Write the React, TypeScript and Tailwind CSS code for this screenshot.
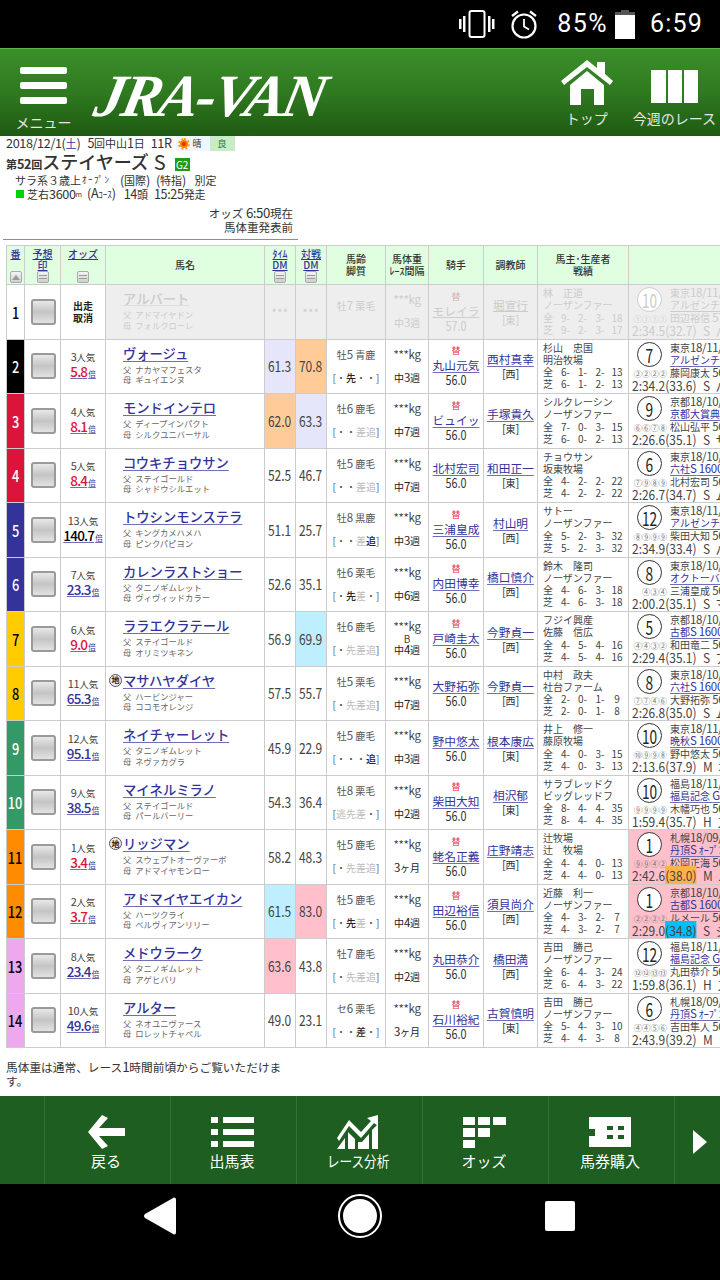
import React from 'react';

type Row = {
  no: number; bg: string; fg: string; name: string; sire: string; dam: string; chiho?: boolean;
  pop: string; odds: string; oddsColor: string; tm: string; tmBg?: string; vs: string; vsBg?: string;
  age: string; legs: number[]; gap: string; blinker?: boolean; sw?: boolean; jockey: string;
  trainer: string; area: string; owner: string; breeder: string; all: string[]; turf: string[];
  rank: string; place: string; race: string; pass: string; rider: string; time: string; last: string; lastBg?: string; tail: string; hit?: boolean;
};

const RED = 'text-[#dc143c]';
const BLUE = 'text-[#333399]';
const BLACK = 'text-black';
const LAV = 'bg-[#e6e6fa]';
const PEACH = 'bg-[#ffcc99]';
const SKY = 'bg-[#bfefff]';
const PINK = 'bg-[#ffc0cb]';

const rows: Row[] = [
  { no: 2, bg: 'bg-black', fg: 'text-white', name: 'ヴォージュ', sire: 'ナカヤマフェスタ', dam: 'ギュイエンヌ', pop: '3人気', odds: '5.8', oddsColor: RED, tm: '61.3', tmBg: LAV, vs: '70.8', vsBg: PEACH, age: '牡5 青鹿', legs: [0, 2, 0, 0], gap: '中3週', sw: true, jockey: '丸山元気', trainer: '西村真幸', area: '西', owner: '杉山　忠国', breeder: '明治牧場', all: ['6', '1', '2', '13'], turf: ['6', '1', '2', '13'], rank: '7', place: '東京18/11/', race: 'アルゼンチン共和国杯', pass: '②②②②', rider: '藤岡康太 56', time: '2:34.2', last: '(33.6)', tail: 'S  バ' },
  { no: 3, bg: 'bg-[#dc143c]', fg: 'text-white', name: 'モンドインテロ', sire: 'ディープインパクト', dam: 'シルクユニバーサル', pop: '4人気', odds: '8.1', oddsColor: RED, tm: '62.0', tmBg: PEACH, vs: '63.3', vsBg: LAV, age: '牡6 鹿毛', legs: [0, 0, 1, 1], gap: '中7週', sw: true, jockey: 'ビュイッ', trainer: '手塚貴久', area: '東', owner: 'シルクレーシン', breeder: 'ノーザンファー', all: ['7', '0', '3', '15'], turf: ['6', '0', '2', '13'], rank: '9', place: '京都18/10/', race: '京都大賞典', pass: '⑥⑥⑦⑧', rider: '松山弘平 56', time: '2:26.6', last: '(35.1)', tail: 'S  サ' },
  { no: 4, bg: 'bg-[#dc143c]', fg: 'text-white', name: 'コウキチョウサン', sire: 'ステイゴールド', dam: 'シャドウシルエット', pop: '5人気', odds: '8.4', oddsColor: RED, tm: '52.5', vs: '46.7', age: '牡5 鹿毛', legs: [0, 0, 1, 1], gap: '中7週', jockey: '北村宏司', trainer: '和田正一', area: '東', owner: 'チョウサン', breeder: '坂東牧場', all: ['4', '2', '2', '22'], turf: ['4', '2', '2', '22'], rank: '6', place: '東京18/10/', race: '六社S 1600', pass: '⑦⑨⑧⑨', rider: '北村宏司 56', time: '2:26.7', last: '(34.7)', tail: 'S  ム' },
  { no: 5, bg: 'bg-[#333399]', fg: 'text-white', name: 'トウシンモンステラ', sire: 'キングカメハメハ', dam: 'ピンクパピヨン', pop: '13人気', odds: '140.7', oddsColor: BLACK, tm: '51.1', vs: '25.7', age: '牡8 黒鹿', legs: [0, 0, 1, 2], gap: '中3週', sw: true, jockey: '三浦皇成', trainer: '村山明', area: '西', owner: 'サトー', breeder: 'ノーザンファー', all: ['5', '2', '3', '32'], turf: ['5', '2', '3', '32'], rank: '12', place: '東京18/11/', race: 'アルゼンチン共和国杯', pass: '⑧⑨⑨⑨', rider: '柴田大知 56', time: '2:34.9', last: '(33.4)', tail: 'S  バ' },
  { no: 6, bg: 'bg-[#333399]', fg: 'text-white', name: 'カレンラストショー', sire: 'タニノギムレット', dam: 'ヴィヴィッドカラー', pop: '7人気', odds: '23.3', oddsColor: BLUE, tm: '52.6', vs: '35.1', age: '牡6 栗毛', legs: [0, 2, 1, 0], gap: '中6週', sw: true, jockey: '内田博幸', trainer: '橋口慎介', area: '西', owner: '鈴木　隆司', breeder: 'ノーザンファー', all: ['4', '6', '3', '18'], turf: ['4', '6', '3', '18'], rank: '8', place: '東京18/10/', race: 'オクトーバーS', pass: '④③④', rider: '三浦皇成 56', time: '2:00.2', last: '(35.1)', tail: 'S  マ' },
  { no: 7, bg: 'bg-[#ffcc00]', fg: 'text-black', name: 'ララエクラテール', sire: 'ステイゴールド', dam: 'オリミツキネン', pop: '6人気', odds: '9.0', oddsColor: RED, tm: '56.9', vs: '69.9', vsBg: SKY, age: '牡6 鹿毛', legs: [0, 1, 1, 1], gap: '中4週', blinker: true, sw: true, jockey: '戸崎圭太', trainer: '今野貞一', area: '西', owner: 'フジイ興産', breeder: '佐藤　信広', all: ['4', '5', '4', '16'], turf: ['4', '5', '4', '16'], rank: '5', place: '京都18/10/', race: '古都S 1600', pass: '④④③②', rider: '和田竜二 56', time: '2:29.4', last: '(35.1)', tail: 'S  ア' },
  { no: 8, bg: 'bg-[#ffcc00]', fg: 'text-black', chiho: true, name: 'マサハヤダイヤ', sire: 'ハービンジャー', dam: 'ココモオレンジ', pop: '11人気', odds: '65.3', oddsColor: BLUE, tm: '57.5', vs: '55.7', age: '牡5 栗毛', legs: [0, 1, 1, 1], gap: '中7週', jockey: '大野拓弥', trainer: '今野貞一', area: '西', owner: '中村　政夫', breeder: '社台ファーム', all: ['2', '0', '1', '9'], turf: ['2', '0', '1', '8'], rank: '8', place: '東京18/10/', race: '六社S 1600', pass: '⑦⑦④⑥', rider: '大野拓弥 56', time: '2:26.8', last: '(35.0)', tail: 'S  ム' },
  { no: 9, bg: 'bg-[#339966]', fg: 'text-white', name: 'ネイチャーレット', sire: 'タニノギムレット', dam: 'ネヴァカグラ', pop: '12人気', odds: '95.1', oddsColor: BLUE, tm: '45.9', vs: '22.9', age: '牡5 鹿毛', legs: [0, 0, 0, 2], gap: '中3週', jockey: '野中悠太', trainer: '根本康広', area: '東', owner: '井上　修一', breeder: '藤原牧場', all: ['4', '0', '3', '15'], turf: ['4', '0', '3', '13'], rank: '10', place: '東京18/11/', race: '晩秋S 1600', pass: '⑩⑨⑨⑧', rider: '野中悠太 56', time: '2:13.6', last: '(37.9)', tail: 'M  ホ' },
  { no: 10, bg: 'bg-[#339966]', fg: 'text-white', name: 'マイネルミラノ', sire: 'ステイゴールド', dam: 'パールバーリー', pop: '9人気', odds: '38.5', oddsColor: BLUE, tm: '54.3', vs: '36.4', age: '牡8 栗毛', legs: [1, 1, 1, 0], gap: '中2週', sw: true, jockey: '柴田大知', trainer: '相沢郁', area: '東', owner: 'サラブレッドク', breeder: 'ビッグレッドフ', all: ['8', '4', '4', '35'], turf: ['8', '4', '4', '35'], rank: '10', place: '福島18/11/', race: '福島記念 G3', pass: '⑨⑨⑨⑨', rider: '木幡巧也 56', time: '1:59.4', last: '(35.7)', tail: 'H  ス' },
  { no: 11, bg: 'bg-[#ff8c00]', fg: 'text-black', chiho: true, name: 'リッジマン', sire: 'スウェプトオーヴァーボ', dam: 'アドマイヤモンロー', pop: '1人気', odds: '3.4', oddsColor: RED, tm: '58.2', vs: '48.3', age: '牡5 鹿毛', legs: [0, 1, 1, 1], gap: '3ヶ月', sw: true, jockey: '蛯名正義', trainer: '庄野靖志', area: '西', owner: '辻牧場', breeder: '辻　牧場', all: ['4', '4', '0', '13'], turf: ['4', '4', '0', '13'], rank: '1', place: '札幌18/09/', race: '丹頂S ｵｰﾌﾟﾝ', pass: '⑨⑨④②', rider: '松岡正海 56', time: '2:42.6', last: '(38.0)', lastBg: 'bg-[#ffb347]', tail: 'M  ニ', hit: true },
  { no: 12, bg: 'bg-[#ff8c00]', fg: 'text-black', name: 'アドマイヤエイカン', sire: 'ハーツクライ', dam: 'ベルヴィアンリリー', pop: '2人気', odds: '3.7', oddsColor: RED, tm: '61.5', tmBg: SKY, vs: '83.0', vsBg: PINK, age: '牡5 鹿毛', legs: [0, 2, 1, 0], gap: '中4週', sw: true, jockey: '田辺裕信', trainer: '須貝尚介', area: '西', owner: '近藤　利一', breeder: 'ノーザンファー', all: ['4', '3', '2', '7'], turf: ['4', '3', '2', '7'], rank: '1', place: '京都18/10/', race: '古都S 1600', pass: '②②②②', rider: 'ルメール 56', time: '2:29.0', last: '(34.8)', lastBg: 'bg-[#00bfff]', tail: 'S  シ', hit: true },
  { no: 13, bg: 'bg-[#eea9ee]', fg: 'text-black', name: 'メドウラーク', sire: 'タニノギムレット', dam: 'アゲヒバリ', pop: '8人気', odds: '23.4', oddsColor: BLUE, tm: '63.6', tmBg: PINK, vs: '43.8', age: '牡7 鹿毛', legs: [0, 1, 1, 1], gap: '中2週', jockey: '丸田恭介', trainer: '橋田満', area: '西', owner: '吉田　勝己', breeder: 'ノーザンファー', all: ['6', '4', '3', '24'], turf: ['6', '4', '3', '22'], rank: '12', place: '福島18/11/', race: '福島記念 G3', pass: '⑫⑫⑬⑬', rider: '丸田恭介 56', time: '1:59.8', last: '(36.1)', tail: 'H  ス' },
  { no: 14, bg: 'bg-[#eea9ee]', fg: 'text-black', name: 'アルター', sire: 'ネオユニヴァース', dam: 'ロレットチャペル', pop: '10人気', odds: '49.6', oddsColor: BLUE, tm: '49.0', vs: '23.1', age: 'セ6 栗毛', legs: [0, 0, 2, 0], gap: '3ヶ月', sw: true, jockey: '石川裕紀', trainer: '古賀慎明', area: '東', owner: '吉田　勝己', breeder: 'ノーザンファー', all: ['5', '4', '3', '10'], turf: ['4', '4', '3', '8'], rank: '6', place: '札幌18/09/', race: '丹頂S ｵｰﾌﾟﾝ', pass: '④④⑤⑥', rider: '吉田隼人 56', time: '2:43.9', last: '(39.2)', tail: 'M  リ' },
];

const COLS = 'grid grid-cols-[19px_36px_45px_159px_31px_31px_59px_43px_55px_54px_91px_120px]';
const CELL = 'border-r border-b border-[#ccc] overflow-hidden';
const LINK = 'underline decoration-[#6f6fb8] underline-offset-2';

// half-width runs sit a little larger than the kanji around them
const Tx = ({ t }: { t: string }) => (
  <>
    {t.split(/([0-9A-Za-z.:/()\-\[\]*]+)/).map((s, i) =>
      i % 2 ? (
        <span key={i} className="text-[1.15em] leading-none tracking-[-0.03em]">{s}</span>
      ) : (
        s
      ),
    )}
  </>
);

// no condensed face is installed, so tall narrow digits are squeezed by hand
const Squeeze = ({ children }: { children: React.ReactNode }) => (
  <span className="inline-block scale-x-[.8] whitespace-nowrap">{children}</span>
);

const SortBtn = ({ up }: { up?: boolean }) => (
  <span className="flex h-[12px] w-[12px] flex-col items-center justify-center gap-[2px] rounded-[2px] border border-[#aaa] bg-gradient-to-b from-[#f4f4f4] to-[#cfcfcf]">
    {up ? (
      <span className="h-0 w-0 border-x-[4px] border-b-[5px] border-x-transparent border-b-[#999]" />
    ) : (
      <>
        <span className="h-px w-[8px] bg-[#999]" />
        <span className="h-px w-[8px] bg-[#999]" />
      </>
    )}
  </span>
);

const CheckBox = () => (
  <div className="ml-[2px] h-[26px] w-[25px] rounded-[3px] border-2 border-[#9a9a9a] bg-gradient-to-b from-[#e8e8e8] via-[#c4c4c4] to-[#e2e2e2]" />
);

const Record = ({ label, v, muted }: { label: string; v: string[]; muted?: boolean }) => (
  <div className={`grid h-[12.3px] grid-cols-[14px_17px_17px_18px_16px] ${muted ? 'text-[#ccc]' : 'text-[#444]'}`}>
    <span>{label}</span>
    <span className="text-center">{v[0]}-</span>
    <span className="text-center">{v[1]}-</span>
    <span className="text-center">{v[2]}-</span>
    <span className="text-center">{v[3]}</span>
  </div>
);

const HeadLink = ({ lines }: { lines: string[] }) => (
  <div className={`${CELL} flex flex-col items-center justify-between bg-[#e0ffe0] pb-px pt-[2px]`}>
    <div className="text-[10px] font-medium leading-[11px] text-[#333399] underline">
      {lines.map((l) => (
        <div key={l} className="text-center">{l}</div>
      ))}
    </div>
    <SortBtn />
  </div>
);

const HeadText = ({ lines }: { lines: string[] }) => (
  <div className={`${CELL} flex flex-col items-center justify-center bg-[#e0ffe0] text-[10px] font-medium leading-[12px] text-[#333]`}>
    {lines.map((l) => (
      <div key={l} className="whitespace-nowrap">{l}</div>
    ))}
  </div>
);

const LastRun = ({ r, muted }: { r: Pick<Row, 'rank' | 'place' | 'race' | 'pass' | 'rider' | 'time' | 'last' | 'lastBg' | 'tail'>; muted?: boolean }) => (
  <div className={`whitespace-nowrap pl-[3px] pt-[2px] text-[10px] leading-[12.3px] ${muted ? 'text-[#ccc]' : 'text-[#444]'}`}>
    <div className="flex h-[25px]">
      <div className={`ml-[5px] flex h-[25px] w-[25px] shrink-0 items-center justify-center rounded-full border-[1.5px] bg-white text-[19px] leading-none ${muted ? 'border-[#ccc] text-[#ccc]' : 'border-[#333] text-[#222]'}`}>
        <span className="inline-block scale-x-[.72]">{r.rank}</span>
      </div>
      <div className="ml-[8px]">
        <div><Tx t={r.place} /></div>
        <div className={`${LINK} ${muted ? 'text-[#ccc] decoration-[#ccc]' : 'text-[#333399]'}`}><Tx t={r.race} /></div>
      </div>
    </div>
    <div className="flex">
      <span className={`w-[35px] text-right text-[8.3px] ${muted ? 'text-[#ccc]' : 'text-[#777]'}`}>{r.pass}</span>
      <span className="ml-[3px]"><Tx t={r.rider} /></span>
    </div>
    <div className="origin-left scale-x-[.92] text-[13px] leading-[13px]">
      <span>{r.time}</span>
      <span className={r.lastBg}>{r.last}</span>
      <span className="ml-[7px] whitespace-pre">{r.tail}</span>
    </div>
  </div>
);

const Leg = ({ legs }: { legs: number[] }) => (
  <span className="whitespace-nowrap text-[#555]">
    [
    {['逃', '先', '差', '追'].map((c, i) => (
      <span key={c} className={`inline-block w-[10px] text-center ${legs[i] === 2 ? 'font-medium text-[#222]' : legs[i] === 1 ? 'text-[#bbb]' : ''}`}>
        {legs[i] === 0 ? '・' : c}
      </span>
    ))}
    ]
  </span>
);

const StatusBar = () => (
  <div className="flex h-[48px] items-center justify-end bg-black pr-[17px] font-['Roboto',sans-serif] text-[25px] text-white">
    <svg width="36" height="28" viewBox="0 0 36 28" className="mr-[14px]" fill="white">
      <rect x="0" y="9" width="2.5" height="10" />
      <rect x="4" y="6" width="2.5" height="16" />
      <rect x="10.5" y="1" width="15" height="26" rx="2" fill="none" stroke="white" strokeWidth="2" />
      <rect x="29" y="6" width="2.5" height="16" />
      <rect x="33" y="9" width="2.5" height="10" />
    </svg>
    <svg width="30" height="30" viewBox="0 0 30 30" className="mr-[18px]" fill="none" stroke="white" strokeWidth="2.2">
      <circle cx="15" cy="17" r="11.5" />
      <path d="M15 10v7.5l5 3" strokeWidth="1.8" />
      <path d="M3 7l6-4.5M27 7l-6-4.5" />
    </svg>
    <span className="mr-[7px] tracking-[1.4px]">85%</span>
    <svg width="20" height="29" viewBox="0 0 20 29" className="mr-[15px]">
      <path d="M6 0h8v2h6v27H0V2h6z" fill="#555" />
      <rect x="0" y="5" width="20" height="24" fill="white" />
    </svg>
    <span className="tracking-[1.2px]">6:59</span>
  </div>
);

const Header = () => (
  <div className="flex h-[88px] border-t border-[#5cb84a] bg-gradient-to-b from-[#3b8f2a] via-[#2f7a20] to-[#1f5a12] text-white">
    <div className="flex w-[88px] flex-col items-center pt-[18px]">
      <div className="ml-[-1px] flex w-[47px] flex-col gap-[8px]">
        <span className="h-[7px] rounded-[2px] bg-white" />
        <span className="h-[7px] rounded-[2px] bg-white" />
        <span className="h-[7px] rounded-[2px] bg-white" />
      </div>
      <span className="ml-[-1px] mt-[9px] text-[14px] leading-[18px] text-[#e6e6e6]">メニュー</span>
    </div>
    {/* logo, real text in a heavy italic face */}
    <div className="ml-[8px] mt-[16px] h-[62px] -skew-x-[12deg] font-['Liberation_Serif',serif] text-[60px] font-bold italic leading-[62px] tracking-[-3px]">JRA-VAN</div>
    <div className="ml-auto flex flex-col items-center pt-[10px]">
      <svg width="56" height="46" viewBox="0 0 56 46" fill="white">
        <path d="M28 1L38 9V3H46V15L54 22L51 26L28 8L5 26L2 22Z" />
        <path d="M11 26L28 12L45 26V46H35V30H22V46H11Z" />
      </svg>
      <span className="mt-[4px] text-[14px] leading-[18px] text-[#e6e6e6]">トップ</span>
    </div>
    <div className="ml-[18px] mr-[4px] flex flex-col items-center pt-[21px]">
      <div className="flex h-[33px] gap-[2px]">
        <span className="w-[15px] bg-white" />
        <span className="w-[14px] bg-white" />
        <span className="w-[14px] bg-white" />
      </div>
      <span className="mt-[6px] text-[14px] leading-[18px] text-[#e6e6e6]">今週のレース</span>
    </div>
  </div>
);

const RaceInfo = () => (
  <div className="relative h-[109px] text-[#333]">
    <div className="flex h-[15px] items-center pl-[6px] text-[11px] leading-[15px]">
      <span><Tx t="2018/12/1(" /></span>
      <span className="text-[#333399]">土</span>
      <span><Tx t=")" /></span>
      <span className="ml-[7px]"><Tx t="5回中山1日" /></span>
      <span className="ml-[6px]"><Tx t="11R" /></span>
      <span className="ml-[4px] flex h-[15px] w-[34px] items-center bg-[#eef6ff] pl-[4px]">
        <span className="h-[8px] w-[8px] rounded-full border-2 border-[#ff7a00] bg-[#e03000] outline-2 outline-dotted outline-[#ff9a00]" />
        <span className="ml-[5px] text-[9px]">晴</span>
      </span>
      <span className="flex h-[15px] w-[25px] items-center justify-center bg-[#c8ecc8] text-[9px] text-[#1f7a1f]">良</span>
    </div>
    <div className="flex h-[21px] items-end pl-[6px]">
      <span className="text-[11px] font-bold leading-[15px]"><Tx t="第52回" /></span>
      <span className="text-[18px] font-medium leading-[21px]">ステイヤーズ</span>
      <span className="ml-[5px] text-[20px] leading-[21px]">S</span>
      <span className="mb-[1px] ml-[9px] flex h-[13px] w-[15px] items-center justify-center bg-[#1f9a1f] text-[10px] text-white">G2</span>
    </div>
    <div className="mt-[1px] flex h-[14px] whitespace-nowrap pl-[15px] text-[11px] leading-[14px]">
      <span>サラ系３歳上</span>
      <span className="ml-[1px] text-[9px] tracking-[1.5px]">ｵｰﾌﾟﾝ</span>
      <span className="ml-[8px] w-[33px] text-center"><Tx t="(" />国際<Tx t=")" /></span>
      <span className="ml-[3px] w-[33px] text-center"><Tx t="(" />特指<Tx t=")" /></span>
      <span className="ml-[7px]">別定</span>
    </div>
    <div className="flex h-[14px] items-center whitespace-nowrap pl-[16px] text-[11px] leading-[14px]">
      <span className="mr-[3px] h-[8px] w-[8px] bg-[#00d400]" />
      <Tx t="芝右3600" /><span className="text-[7px]">m</span>
      <span className="ml-[5px]"><Tx t="(A" /><span className="text-[9px]">ｺｰｽ</span><Tx t=")" /></span>
      <span className="ml-[8px]"><Tx t="14頭" /></span>
      <span className="ml-[6px]"><Tx t="15:25発走" /></span>
    </div>
    <div className="ml-[3px] mt-[5px] w-[295px] border-b border-[#8888bb] pb-[5px] text-right text-[11.5px] leading-[14px]">
      <div className="pr-[5px]">オッズ <Tx t="6:50" />現在</div>
      <div className="pr-[5px]">馬体重発表前</div>
    </div>
  </div>
);

const RaceTable = () => (
  <div className="ml-[6px] w-[714px] overflow-hidden">
    <div className={`${COLS} h-[40px] w-max border-t border-[#ccc]`}>
      <div className={`${CELL} flex flex-col items-center justify-between border-l bg-[#e0ffe0] pb-px pt-[2px]`}>
        <span className="text-[10px] font-medium leading-[11px] text-[#333399] underline">番</span>
        <SortBtn up />
      </div>
      <HeadLink lines={['予想', '印']} />
      <HeadLink lines={['オッズ']} />
      <HeadText lines={['馬名']} />
      <HeadLink lines={['ﾀｲﾑ', 'DM']} />
      <HeadLink lines={['対戦', 'DM']} />
      <HeadText lines={['馬齢', '脚質']} />
      <HeadText lines={['馬体重', 'ﾚｰｽ間隔']} />
      <HeadText lines={['騎手']} />
      <HeadText lines={['調教師']} />
      <HeadText lines={['馬主･生産者', '戦績']} />
      <div className={`${CELL} bg-[#e0ffe0]`} />
    </div>

    {/* scratched horse */}
    <div className={`${COLS} h-[54.5px] w-max text-[#ccc]`}>
      <div className={`${CELL} flex items-center justify-center border-l bg-white text-[16px] font-medium text-black`}><Squeeze>1</Squeeze></div>
      <div className={`${CELL} flex items-center justify-center bg-white`}><CheckBox /></div>
      <div className={`${CELL} flex flex-col items-center justify-center bg-white text-[10px] font-bold leading-[12px] text-[#222]`}>
        <span>出走</span><span>取消</span>
      </div>
      <div className={`${CELL} bg-[#eee] pl-[17px] pt-[5px]`}>
        <div className="text-[13.3px] font-medium leading-[17px] underline decoration-[#ddd]">アルバート</div>
        <div className="mt-[2px] whitespace-nowrap text-[8.3px] leading-[10.5px]">父<span className="ml-[4px]">アドマイヤドン</span></div>
        <div className="whitespace-nowrap text-[8.3px] leading-[10.5px]">母<span className="ml-[4px]">フォルクローレ</span></div>
      </div>
      <div className={`${CELL} flex items-center justify-center bg-[#eee] text-[11px] tracking-[0.5px]`}>***</div>
      <div className={`${CELL} flex items-center justify-center bg-[#eee] text-[11px] tracking-[0.5px]`}>***</div>
      <div className={`${CELL} bg-[#eee] pt-[15px] text-center text-[10px] leading-[12px]`}><Tx t="牡7 栗毛" /></div>
      <div className={`${CELL} flex flex-col items-center bg-[#eee] pt-[9px] text-[10px] leading-[12px]`}>
        <span className="h-[12px]"><Tx t="***kg" /></span>
        <span className="h-[11px]" />
        <span className="h-[12px]"><Tx t="中3週" /></span>
      </div>
      <div className={`${CELL} flex flex-col items-center justify-center bg-[#eee]`}>
        <span className="text-[9px] leading-[12px] text-[#d8b0b0]">替</span>
        <span className="text-[11.7px] leading-[15px] underline decoration-[#ccc]">モレイラ</span>
        <span className="text-[13.5px] leading-[15px]"><Squeeze>57.0</Squeeze></span>
      </div>
      <div className={`${CELL} flex flex-col items-center justify-center bg-[#eee]`}>
        <span className="text-[11.7px] leading-[15px] underline decoration-[#ccc]">堀宣行</span>
        <span className="text-[10px] leading-[15px]"><Tx t="[東]" /></span>
      </div>
      <div className={`${CELL} bg-[#eee] pl-[5px] pt-[2px] text-[10px] leading-[12.3px]`}>
        <div className="whitespace-nowrap">林　正道</div>
        <div className="whitespace-nowrap">ノーザンファー</div>
        <Record label="全" v={['9', '2', '3', '18']} muted />
        <Record label="芝" v={['9', '2', '3', '17']} muted />
      </div>
      <div className={`${CELL} bg-[#eee]`}>
        <LastRun muted r={{ rank: '10', place: '東京18/11/', race: 'アルゼンチン共和国杯', pass: '①①①①', rider: '田辺裕信 57', time: '2:34.5', last: '(32.7)', tail: 'S  バ' }} />
      </div>
    </div>

    {rows.map((r) => (
      <div key={r.no} className={`${COLS} h-[54.5px] w-max`}>
        <div className={`${CELL} flex items-center justify-center border-l ${r.bg} ${r.fg} text-[16px] font-medium`}><Squeeze>{r.no}</Squeeze></div>
        <div className={`${CELL} flex items-center justify-center`}><CheckBox /></div>
        <div className={`${CELL} flex flex-col items-center justify-center text-[#444]`}>
          <span className="text-[9.5px] leading-[12px]"><Tx t={r.pop} /></span>
          <span className={`whitespace-nowrap leading-[14px] underline decoration-[#6f6fb8] underline-offset-1 ${BLUE}`}>
            <span className={`text-[13.5px] font-medium tracking-[-0.8px] ${r.oddsColor}`}>{r.odds}</span>
            <span className="ml-px text-[7.5px]">倍</span>
          </span>
        </div>
        <div className={`${CELL} relative pl-[17px] pt-[5px] text-[#666]`}>
          {r.chiho && (
            <span className="absolute left-[3px] top-[7px] flex h-[13px] w-[13px] items-center justify-center rounded-full border border-[#555] bg-[#eee] text-[8px] font-bold text-[#222]">地</span>
          )}
          <div className={`whitespace-nowrap text-[13.3px] font-medium leading-[17px] text-[#333399] ${LINK}`}>{r.name}</div>
          <div className="mt-[2px] whitespace-nowrap text-[8.3px] leading-[10.5px]">父<span className="ml-[4px]">{r.sire}</span></div>
          <div className="whitespace-nowrap text-[8.3px] leading-[10.5px]">母<span className="ml-[4px]">{r.dam}</span></div>
        </div>
        <div className={`${CELL} flex items-center justify-center ${r.tmBg ?? ''} text-[15px] text-[#444]`}><Squeeze>{r.tm}</Squeeze></div>
        <div className={`${CELL} flex items-center justify-center ${r.vsBg ?? ''} text-[15px] text-[#444]`}><Squeeze>{r.vs}</Squeeze></div>
        <div className={`${CELL} flex flex-col items-center pt-[9px] text-[10px] leading-[12px] text-[#555]`}>
          <span className="h-[12px] whitespace-nowrap"><Tx t={r.age} /></span>
          <span className="mt-[11px] h-[12px]"><Leg legs={r.legs} /></span>
        </div>
        <div className={`${CELL} flex flex-col items-center pt-[9px] text-[10px] leading-[12px] text-[#444]`}>
          <span className="h-[12px]"><Tx t="***kg" /></span>
          <span className="h-[11px] text-[10px] leading-[11px]">{r.blinker ? 'B' : ''}</span>
          <span className="h-[12px] text-[#222]"><Tx t={r.gap} /></span>
        </div>
        <div className={`${CELL} flex flex-col items-center justify-center`}>
          {r.sw && <span className="text-[9px] leading-[12px] text-[#e03050]">替</span>}
          <span className={`whitespace-nowrap text-[11.7px] leading-[15px] text-[#333399] ${LINK}`}>{r.jockey}</span>
          <span className="text-[13.5px] leading-[15px] text-[#333]"><Squeeze>56.0</Squeeze></span>
        </div>
        <div className={`${CELL} flex flex-col items-center justify-center`}>
          <span className={`whitespace-nowrap text-[11.7px] leading-[15px] text-[#333399] ${LINK}`}>{r.trainer}</span>
          <span className="text-[10px] leading-[15px] text-[#333]"><Tx t={`[${r.area}]`} /></span>
        </div>
        <div className={`${CELL} pl-[5px] pt-[2px] text-[10px] leading-[12.3px] text-[#444]`}>
          <div className="whitespace-nowrap">{r.owner}</div>
          <div className="whitespace-nowrap">{r.breeder}</div>
          <Record label="全" v={r.all} />
          <Record label="芝" v={r.turf} />
        </div>
        <div className={`${CELL} ${r.hit ? PINK : ''}`}><LastRun r={r} /></div>
      </div>
    ))}
  </div>
);

const BackIcon = () => (
  <svg width="37" height="34" viewBox="0 0 37 34" fill="white">
    <path d="M14 0L20 3L11 13H37V21H11L20 31L14 34L0 17Z" />
  </svg>
);

const ListIcon = () => (
  <svg width="43" height="30" viewBox="0 0 43 30" fill="white">
    <rect width="7" height="6" />
    <rect x="12" width="31" height="6" />
    <rect y="12" width="7" height="6" />
    <rect x="12" y="12" width="31" height="6" />
    <rect y="24" width="7" height="6" />
    <rect x="12" y="24" width="31" height="6" />
  </svg>
);

const ChartIcon = () => (
  <svg width="42" height="34" viewBox="0 0 42 34" fill="white">
    <path d="M0 23L12 5L24 17L34 6L30 3L41 0V11L37 8L24 23L12 11L2 26Z" />
    <path d="M0 34L8 23V34ZM11 34V17L18 24V34ZM21 34V27L25 27L32 19V34ZM35 34V15L41 9V34Z" />
  </svg>
);

const OddsIcon = () => (
  <svg width="43" height="31" viewBox="0 0 43 31" fill="white">
    <rect width="12" height="8" />
    <rect x="15" width="12" height="8" />
    <rect x="30" width="13" height="8" />
    <rect y="11" width="12" height="9" />
    <rect x="15" y="11" width="12" height="9" />
    <rect y="23" width="12" height="8" />
  </svg>
);

const TicketIcon = () => (
  <svg width="42" height="30" viewBox="0 0 42 30">
    <path d="M0 0H42V30H0V19H6V12H0Z" fill="white" />
    <g fill="#1e5e20">
      <rect x="18" y="9" width="6" height="4" />
      <rect x="29" y="9" width="6" height="4" />
      <rect x="18" y="18" width="6" height="4" />
      <rect x="29" y="18" width="6" height="4" />
    </g>
  </svg>
);

const NavItem = ({ label, icon }: { label: React.ReactNode; icon: React.ReactNode }) => (
  <div className="flex w-[126px] flex-col items-center border-l border-[#2c7430] pr-[3px] pt-[18px]">
    <div className="flex h-[36px] items-center">{icon}</div>
    <span className="mt-[2px] whitespace-nowrap text-[15px] leading-[18px] text-white">{label}</span>
  </div>
);

const BottomNav = () => (
  <div className="flex h-[88px] bg-[#1e5e20] pl-[44px]">
    <NavItem label="戻る" icon={<BackIcon />} />
    <NavItem label="出馬表" icon={<ListIcon />} />
    <NavItem label={<span className="inline-block scale-x-[.84]">レース分析</span>} icon={<ChartIcon />} />
    <NavItem label="オッズ" icon={<OddsIcon />} />
    <NavItem label="馬券購入" icon={<TicketIcon />} />
    <div className="flex flex-1 items-start border-l border-[#2c7430] pl-[18px] pt-[34px]">
      <span className="h-0 w-0 border-y-[12px] border-l-[14px] border-y-transparent border-l-white" />
    </div>
  </div>
);

const AndroidNav = () => (
  <div className="flex h-[96px] items-center bg-black pb-[32px] pl-[144px]">
    <svg width="32" height="38" viewBox="0 0 32 38" fill="white">
      <path d="M30 0.5Q32 0 32 3V35Q32 38 30 37.5L1 21Q-1 19 1 17Z" />
    </svg>
    <div className="ml-[162px] flex h-[44px] w-[44px] items-center justify-center rounded-full border-2 border-white">
      <span className="h-[34px] w-[34px] rounded-full bg-white" />
    </div>
    <span className="ml-[163px] h-[30px] w-[30px] rounded-[2px] bg-white" />
  </div>
);

export default function App() {
  return (
    <div className="flex h-[1280px] w-[720px] flex-col overflow-hidden bg-white font-['Noto_Sans_CJK_JP',sans-serif]">
      <StatusBar />
      <Header />
      <div className="flex-1 overflow-hidden">
        <RaceInfo />
        <RaceTable />
        <div className="ml-[6px] mt-[12px] w-[285px] text-[11.7px] leading-[14px] text-[#333]">
          馬体重は通常、レース<Tx t="1" />時間前頃からご覧いただけます。
        </div>
      </div>
      <BottomNav />
      <AndroidNav />
    </div>
  );
}
